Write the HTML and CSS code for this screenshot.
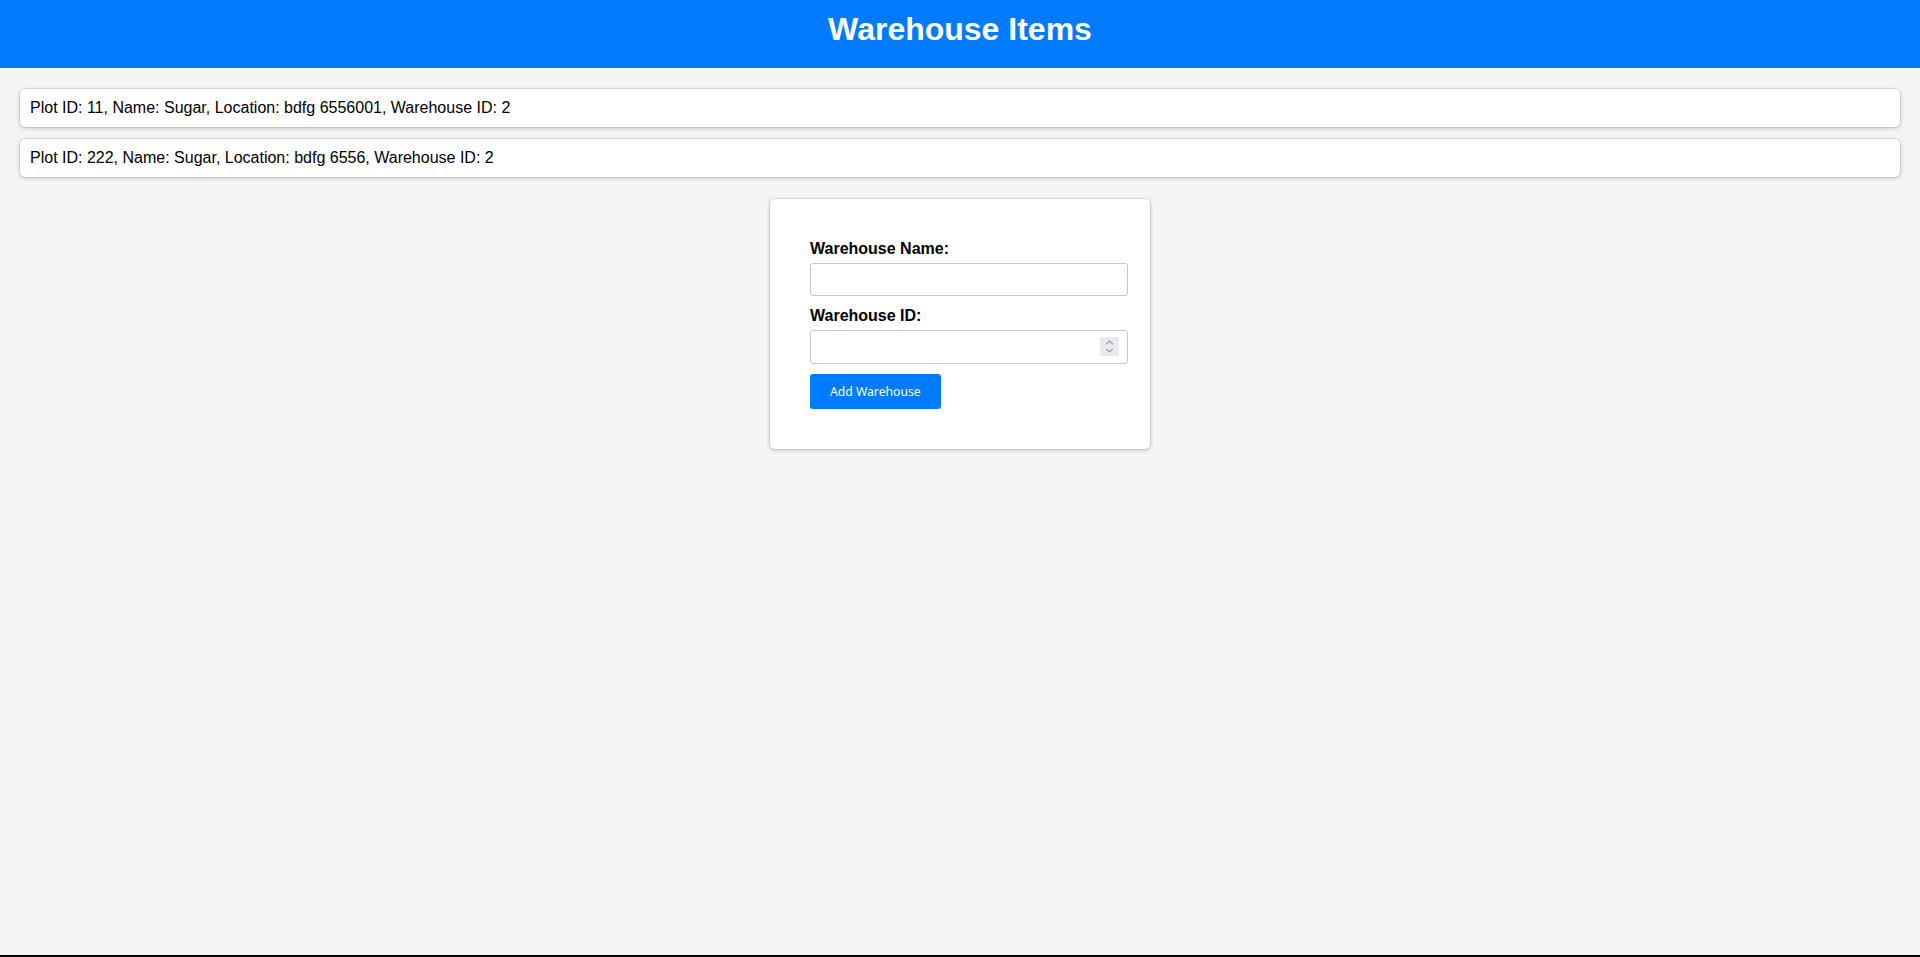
FILE: index.html
```html
<!DOCTYPE html>
<html lang="en">
<head>
<meta charset="utf-8">
<title>Warehouse Items</title>
<link rel="stylesheet" href="styles.css">
</head>
<body>
<header class="top-bar">
  <h1 class="title">Warehouse Items</h1>
</header>
<main class="content">
  <ul class="item-list">
    <li class="item">Plot ID: 11, Name: Sugar, Location: bdfg 6556001, Warehouse ID: 2</li>
    <li class="item">Plot ID: 222, Name: Sugar, Location: bdfg 6556, Warehouse ID: 2</li>
  </ul>
  <div class="form-card">
    <form class="warehouse-form">
      <label class="field-label" for="wname">Warehouse Name:</label>
      <input class="field-input" id="wname" type="text">
      <label class="field-label" for="wid">Warehouse ID:</label>
      <div class="number-wrap">
        <input class="field-input" id="wid" type="text">
        <span class="spinner" aria-hidden="true">
          <svg width="19" height="19" viewBox="0 0 19 19"><path d="M6.2 7.2 L9.5 4.2 L12.8 7.2" fill="none" stroke="#8c8c92" stroke-width="1.1"/><path d="M6.2 11.8 L9.5 14.8 L12.8 11.8" fill="none" stroke="#8c8c92" stroke-width="1.1"/></svg>
        </span>
      </div>
      <button class="submit-btn" type="button">Add Warehouse</button>
    </form>
  </div>
</main>
<div class="bottom-edge"></div>
</body>
</html>
```
FILE: styles.css
```css
html, body {
  margin: 0;
  padding: 0;
}
body {
  background: #f4f4f4;
  font-family: "Liberation Sans", Arial, sans-serif;
  color: #000;
  min-height: 957px;
}
.top-bar {
  background: #007bff;
  color: #fff;
  text-align: center;
  padding: 11px 0 20px;
}
.title {
  margin: 0;
  font-size: 32px;
  font-weight: bold;
  line-height: 37px;
}
.content {
  padding: 21px 20px;
}
.item-list {
  list-style: none;
  margin: 0;
  padding: 0;
  display: flex;
  flex-direction: column;
  gap: 12px;
}
.item {
  background: #fff;
  padding: 10px;
  font-size: 16px;
  line-height: 18px;
  border-radius: 5px;
  box-shadow: 0 0 0 1px rgba(0,0,0,0.08), 0 1px 4px rgba(0,0,0,0.22);
}
.form-card {
  width: 300px;
  margin: 22px auto 0;
  background: #fff;
  padding: 40px;
  border-radius: 5px;
  box-shadow: 0 0 0 1px rgba(0,0,0,0.06), 0 1px 4px rgba(0,0,0,0.22);
}
.warehouse-form {
  display: flex;
  flex-direction: column;
  align-items: flex-start;
}
.field-label {
  display: block;
  font-weight: bold;
  font-size: 16px;
  line-height: 19px;
  margin-bottom: 5px;
}
.field-input {
  display: block;
  width: 100%;
  padding: 8px;
  border: 1px solid #c8c8c8;
  border-radius: 3px;
  font-family: "Liberation Sans", Arial, sans-serif;
  font-size: 13.33px;
  margin: 0 0 10px;
  background: #fff;
  outline: none;
  box-sizing: content-box;
  height: 15.4px;
}
.number-wrap {
  position: relative;
  width: 100%;
}
.spinner {
  position: absolute;
  right: -9px;
  top: 7px;
  width: 19px;
  height: 19px;
  background: #e9e9ee;
  display: flex;
  align-items: center;
  justify-content: center;
}
.submit-btn {
  background: #007bff;
  color: #fff;
  border: none;
  border-radius: 3px;
  padding: 10px 20px;
  font-family: "Noto Sans", sans-serif;
  font-size: 12.2px;
  line-height: 15px;
  cursor: pointer;
}
.bottom-edge {
  position: fixed;
  left: 0;
  right: 0;
  bottom: 0;
  height: 2px;
  background: #000;
}
```
